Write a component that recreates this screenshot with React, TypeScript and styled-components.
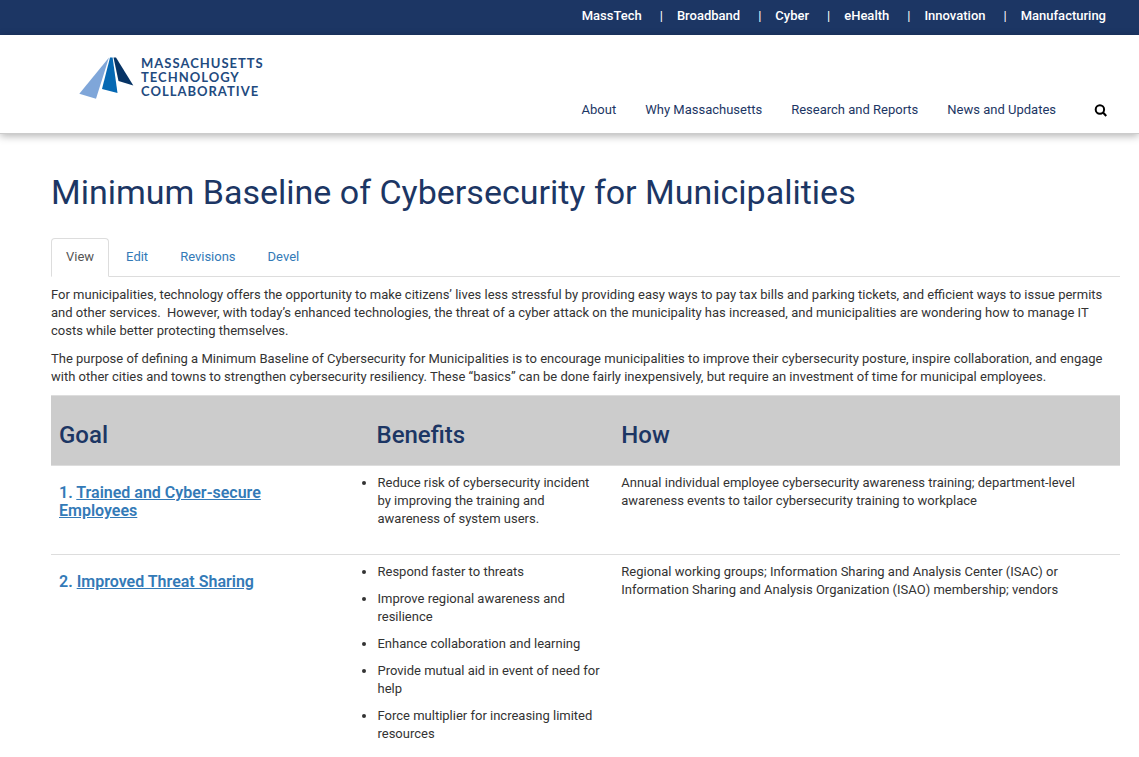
import React from "react";
import styled, { createGlobalStyle } from "styled-components";

const navy = "#1c3664";
const link = "#337ab7";
const rule = "#dddddd";

const GlobalStyle = createGlobalStyle`
  *, *::before, *::after { box-sizing: border-box; }
  body {
    margin: 0;
    background: #fff;
    color: #333;
    font-family: Roboto, "Liberation Sans", sans-serif;
    font-size: 13px;
    line-height: 18px;
  }
`;

const TopBar = styled.nav`
  display: flex;
  justify-content: flex-end;
  background: ${navy};
  padding: 7px 33px 10px 16px;
`;

const TopList = styled.ul`
  display: flex;
  list-style: none;
  margin: 0;
  padding: 0;
`;

const TopItem = styled.li`
  color: #fff;
  font-weight: 500;
  & + &::before {
    content: "|";
    padding: 0 14px 0 18px;
    font-weight: 400;
  }
`;

const TopLink = styled.a`
  color: #fff;
  text-decoration: none;
`;

const Header = styled.header`
  display: flex;
  justify-content: space-between;
  align-items: flex-end;
  padding: 20px 32px 14px 79px;
  border-bottom: 1px solid #ccc;
  box-shadow: 0 2px 8px rgba(0, 0, 0, 0.3);
`;

const Logo = styled.a`
  display: flex;
  align-self: flex-start;
  gap: 7px;
  color: #1f4b80;
  text-decoration: none;
`;

const LogoText = styled.span`
  padding-top: 1px;
  font-family: Lato, "Open Sans", sans-serif;
  font-size: 13px;
  font-weight: 700;
  line-height: 14px;
  letter-spacing: 1px;
`;

const LogoLine = styled.span`
  display: block;
`;

const MainNav = styled.nav`
  display: flex;
  align-items: center;
  gap: 29px;
  padding-top: 46px;
`;

const NavLink = styled.a`
  color: ${navy};
  text-decoration: none;
`;

const SearchButton = styled.button`
  display: flex;
  margin-left: 9px;
  padding: 1px 0 0;
  border: 0;
  background: none;
`;

const Main = styled.main`
  padding: 38px 19px 24px 51px;
`;

const Title = styled.h1`
  margin: 0;
  color: ${navy};
  font-size: 34px;
  font-weight: 400;
  line-height: 40px;
`;

const Tabs = styled.nav`
  display: flex;
  gap: 2px;
  margin: 26px 0 9px;
  border-bottom: 1px solid ${rule};
`;

const Tab = styled.a<{ $active?: boolean }>`
  margin-bottom: -1px;
  padding: 9px 14px 10px;
  border: 1px solid ${(p) => (p.$active ? rule : "transparent")};
  border-bottom-color: ${(p) => (p.$active ? "#fff" : "transparent")};
  border-radius: 4px 4px 0 0;
  color: ${(p) => (p.$active ? "#555" : link)};
  text-decoration: none;
`;

const Paragraph = styled.p`
  margin: 0;
  & + & {
    margin-top: 10px;
  }
`;

const Table = styled.table`
  width: 100%;
  margin-top: 9px;
  border-collapse: collapse;
`;

const HeadCell = styled.th<{ $width: string }>`
  width: ${(p) => p.$width};
  padding: 25px 8px 16px;
  border-top: 1px solid ${rule};
  background: #ccc;
  color: ${navy};
  font-size: 24px;
  font-weight: 500;
  line-height: 28px;
  text-align: left;
`;

const Cell = styled.td`
  padding: 8px;
  border-top: 1px solid ${rule};
  vertical-align: top;
`;

const Goal = styled.h2`
  margin: 10px 60px 10px 0;
  color: ${link};
  font-size: 16px;
  font-weight: 600;
  line-height: 18px;
`;

const GoalLink = styled.a`
  color: inherit;
  text-decoration: underline;
`;

const Benefits = styled.ul`
  margin: 0 0 18px;
  padding: 0 4px 0 1px;
`;

const Benefit = styled.li`
  margin-bottom: 9px;
`;

const topLinks = ["MassTech", "Broadband", "Cyber", "eHealth", "Innovation", "Manufacturing"];
const navLinks = ["About", "Why Massachusetts", "Research and Reports", "News and Updates"];
const tabs = ["View", "Edit", "Revisions", "Devel"];

const rows = [
  {
    goal: "Trained and Cyber-secure Employees",
    benefits: [
      "Reduce risk of cybersecurity incident by improving the training and awareness of system users.",
    ],
    how: "Annual individual employee cybersecurity awareness training; department-level awareness events to tailor cybersecurity training to workplace",
  },
  {
    goal: "Improved Threat Sharing",
    benefits: [
      "Respond faster to threats",
      "Improve regional awareness and resilience",
      "Enhance collaboration and learning",
      "Provide mutual aid in event of need for help",
      "Force multiplier for increasing limited resources",
    ],
    how: "Regional working groups; Information Sharing and Analysis Center (ISAC) or Information Sharing and Analysis Organization (ISAO) membership; vendors",
  },
];

export default function App() {
  return (
    <>
      <GlobalStyle />
      <TopBar aria-label="Divisions">
        <TopList>
          {topLinks.map((t) => (
            <TopItem key={t}>
              <TopLink href="#">{t}</TopLink>
            </TopItem>
          ))}
        </TopList>
      </TopBar>
      <Header>
        <Logo href="#">
          <svg width="55" height="44" viewBox="0 0 55 44" aria-hidden="true">
            <path d="M30 2.5 L0.3 38.8 L17 43.8 Z" fill="#7fa6d9" />
            <path d="M31 2.5 L33.6 2.5 L38.5 38 L23 34 Z" fill="#0568b3" />
            <path d="M34.5 2.5 L37 2.5 L54.3 30.5 L39.5 26 Z" fill="#063365" />
          </svg>
          <LogoText>
            <LogoLine>MASSACHUSETTS</LogoLine>
            <LogoLine>TECHNOLOGY</LogoLine>
            <LogoLine>COLLABORATIVE</LogoLine>
          </LogoText>
        </Logo>
        <MainNav aria-label="Main">
          {navLinks.map((t) => (
            <NavLink key={t} href="#">
              {t}
            </NavLink>
          ))}
          <SearchButton aria-label="Search">
            <svg width="13" height="13" viewBox="0 0 13 13" fill="none" stroke="#000" strokeWidth="2" aria-hidden="true">
              <circle cx="5.9" cy="5.5" r="4.2" />
              <path d="M9 8.6 L12.3 12" strokeWidth="2.2" />
            </svg>
          </SearchButton>
        </MainNav>
      </Header>
      <Main>
        <Title>Minimum Baseline of Cybersecurity for Municipalities</Title>
        <Tabs aria-label="Page tabs">
          {tabs.map((t, i) => (
            <Tab key={t} href="#" $active={i === 0}>
              {t}
            </Tab>
          ))}
        </Tabs>
        <Paragraph>
          For municipalities, technology offers the opportunity to make citizens’ lives less stressful by providing easy
          ways to pay tax bills and parking tickets, and efficient ways to issue permits and other services.&nbsp; However,
          with today’s enhanced technologies, the threat of a cyber attack on the municipality has increased, and
          municipalities are wondering how to manage IT costs while better protecting themselves.
        </Paragraph>
        <Paragraph>
          The purpose of defining a Minimum Baseline of Cybersecurity for Municipalities is to encourage municipalities to
          improve their cybersecurity posture, inspire collaboration, and engage with other cities and towns to strengthen
          cybersecurity resiliency. These “basics” can be done fairly inexpensively, but require an investment of time for
          municipal employees.
        </Paragraph>
        <Table>
          <thead>
            <tr>
              <HeadCell $width="29.7%">Goal</HeadCell>
              <HeadCell $width="22.9%">Benefits</HeadCell>
              <HeadCell $width="47.4%">How</HeadCell>
            </tr>
          </thead>
          <tbody>
            {rows.map((r, i) => (
              <tr key={r.goal}>
                <Cell>
                  <Goal>
                    {`${i + 1}. `}
                    <GoalLink href="#">{r.goal}</GoalLink>
                  </Goal>
                </Cell>
                <Cell>
                  <Benefits>
                    {r.benefits.map((b) => (
                      <Benefit key={b}>{b}</Benefit>
                    ))}
                  </Benefits>
                </Cell>
                <Cell>{r.how}</Cell>
              </tr>
            ))}
          </tbody>
        </Table>
      </Main>
    </>
  );
}
